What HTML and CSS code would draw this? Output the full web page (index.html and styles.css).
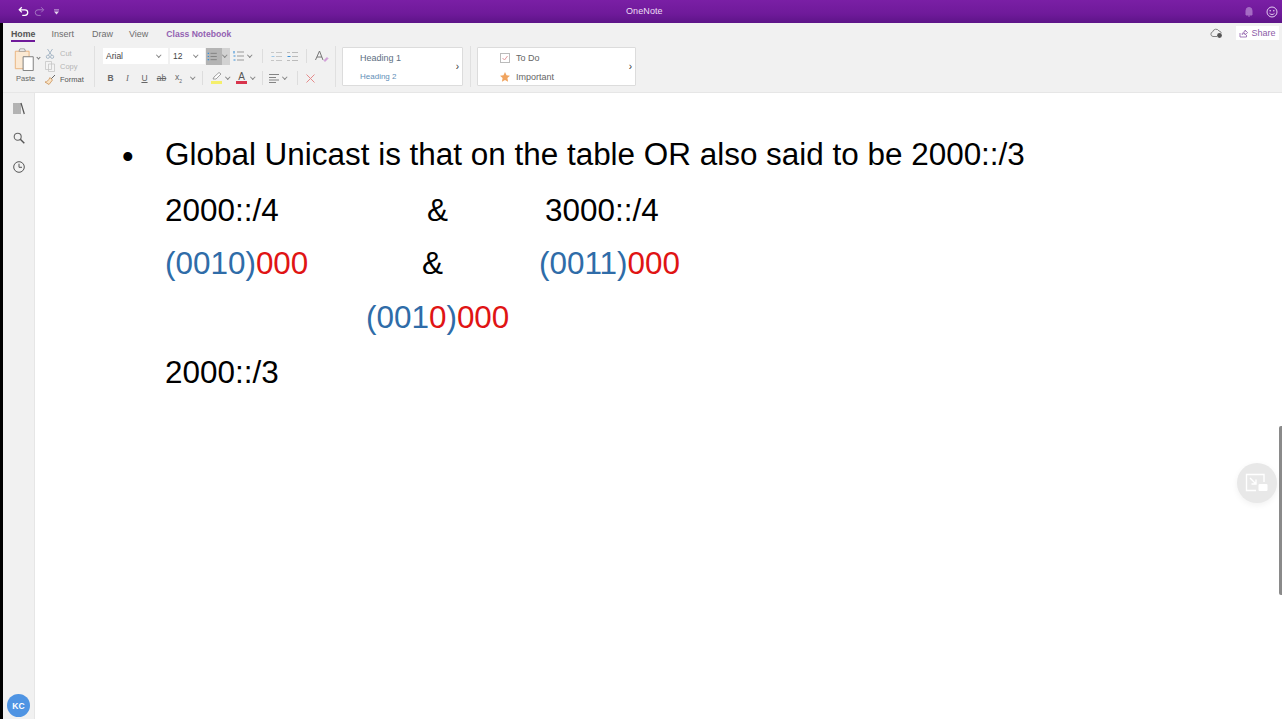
FILE: index.html
```html
<!DOCTYPE html>
<html lang="en">
<head>
<meta charset="utf-8">
<title>OneNote</title>
<link rel="stylesheet" href="styles.css">
</head>
<body>
<div class="app">
  <header class="titlebar">
    <div class="qat">
      <svg class="qi" width="11" height="11" viewBox="0 0 13 12"><path d="M4.500 1 1.500 4l3 3M2 4h6.200a3.300 3.300 0 0 1 0 6.600H5" fill="none" stroke="#fff" stroke-width="1.500"/></svg>
      <svg class="qi" width="11" height="11" viewBox="0 0 13 12"><path d="M8.500 1l3 3-3 3M11 4H4.800a3.300 3.300 0 0 0 0 6.600H8" fill="none" stroke="#a77cc4" stroke-width="1.100"/></svg>
      <svg class="qi-more" width="5" height="6" viewBox="0 0 6 7"><path d="M0 1h6" stroke="#e4d4ee" stroke-width="1"/><path d="M0 3h6L3 6.500z" fill="#e4d4ee"/></svg>
    </div>
    <div class="apptitle">OneNote</div>
    <div class="titleright">
      <svg width="8" height="10" viewBox="0 0 8 10"><path d="M1 8V3.500a3 3 0 0 1 6 0V8zM3 9h2" fill="#a56cc4" stroke="#a56cc4"/></svg>
      <svg width="12" height="12" viewBox="0 0 12 12"><circle cx="6" cy="6" r="5" fill="none" stroke="#e3cdf0" stroke-width="1"/><circle cx="4.200" cy="4.800" r=".8" fill="#e3cdf0"/><circle cx="7.800" cy="4.800" r=".8" fill="#e3cdf0"/><path d="M3.500 7.300c1.200 1.600 3.800 1.600 5 0" fill="none" stroke="#e3cdf0"/></svg>
    </div>
  </header>

  <section class="ribbon">
    <div class="tabs">
      <nav class="tablist">
        <span class="tab tab-active">Home</span>
        <span class="tab">Insert</span>
        <span class="tab t-draw">Draw</span>
        <span class="tab">View</span>
        <span class="tab tab-class">Class Notebook</span>
      </nav>
      <div class="tabright">
        <svg width="13" height="11" viewBox="0 0 13 11"><path d="M3 8.500a2.400 2.400 0 0 1-.3-4.700A3.400 3.400 0 0 1 9 3a2.600 2.600 0 0 1 2.300 2" fill="none" stroke="#777" stroke-width=".9"/><path d="M3 8.500h4" stroke="#777" stroke-width=".9"/><circle cx="9.500" cy="7.500" r="2.400" fill="#555"/></svg>
        <span class="share">
          <svg width="9" height="9" viewBox="0 0 9 9"><path d="M1 4v4h6.500V6M3 5.500C3.300 3.600 4.600 2.800 6 2.800V1l2.600 2.600L6 6V4.400C4.800 4.400 3.800 4.700 3 5.500z" fill="none" stroke="#8d5ba8" stroke-width=".8"/></svg>
          Share
        </span>
      </div>
    </div>
    <div class="tools">
      <div class="clip">
        <div class="paste">
          <svg width="21" height="23" viewBox="0 0 22 25"><path d="M1 3.500h15v19H1z" fill="#fbe9d3" stroke="#e9b27a"/><path d="M5 3.500h7l-1-2.500H6z" fill="#fff" stroke="#999"/><path d="M9.500 9.500h11v15h-11z" fill="#fff" stroke="#777"/></svg>
          <span class="caret-t"></span>
          <span class="paste-l">Paste</span>
        </div>
        <div class="cliprows">
          <span class="cliprow off"><svg width="9" height="11" viewBox="0 0 9 11"><path d="M2 1l4 6M7 1 3 7" stroke="#a9b9c8" fill="none"/><circle cx="2.400" cy="8.800" r="1.600" fill="none" stroke="#a9b9c8"/><circle cx="6.600" cy="8.800" r="1.600" fill="none" stroke="#a9b9c8"/></svg>Cut</span>
          <span class="cliprow off"><svg width="10" height="11" viewBox="0 0 10 11"><path d="M.5.500h6v8h-6zM3.500 3h6v7.500h-6z" fill="#f3f3f3" stroke="#c5c5c5" stroke-width=".8"/></svg>Copy</span>
          <span class="cliprow"><svg width="12" height="11" viewBox="0 0 12 11"><path d="M11 1 7 5" stroke="#666"/><path d="M6 3.500 8.500 6 5 10.500 1 8c2 0 3.500-1.500 5-4.500z" fill="#fbe3c3" stroke="#c9935a" stroke-width=".8"/></svg>Format</span>
        </div>
      </div>
      <span class="vsep"></span>
      <div class="fontgrp">
        <div class="fr">
          <span class="select sel-font">Arial<i class="caret"></i></span>
          <span class="select sel-size">12<i class="caret"></i></span>
          <span class="ic-active">
            <svg width="15" height="13" viewBox="0 0 15 13"><path d="M5 2h9M5 6.500h9M5 11h9" stroke="#7b7b7b" stroke-width="1.200"/><path d="M1 2h2M1 6.500h2M1 11h2" stroke="#3a8fd6" stroke-width="1.600"/></svg>
            <i class="caret caret-on"></i>
          </span>
          <svg width="11" height="12" viewBox="0 0 11 12"><path d="M4 2h7M4 6h7M4 10h7" stroke="#999"/><path d="M1 1v2.500M.5 6h2M.5 10h2" stroke="#3a8fd6" stroke-width="1.100"/></svg>
          <i class="caret caret-l"></i>
          <span class="tsep tsep-a"></span>
          <svg width="11" height="9" viewBox="0 0 11 9"><path d="M5 .500h6M5 4.500h6M5 8.500h6M0 .500h3M0 8.500h3" stroke="#c6c6c6"/><path d="M3.500 4.500H.5" stroke="#9cc6e6"/></svg>
          <svg width="11" height="9" viewBox="0 0 11 9"><path d="M5 .500h6M5 4.500h6M5 8.500h6M0 .500h3M0 8.500h3" stroke="#bbb"/><path d="M.5 4.500h3" stroke="#3a8fd6"/></svg>
          <span class="tsep tsep-b"></span>
          <svg width="14" height="13" viewBox="0 0 14 13"><path d="M.5 10 4.500 1l3.500 9M2 7h5" fill="none" stroke="#777"/><path d="M9 10.500l3-3 1 1-3 3z" fill="#d8a3dd" stroke="#c17fc9" stroke-width=".6"/></svg>
        </div>
        <div class="fr fr2">
          <b class="fmt">B</b>
          <i class="fmt fmt-i">I</i>
          <u class="fmt">U</u>
          <s class="fmt">ab</s>
          <span class="fmt">x<sub>2</sub></span><i class="caret"></i>
          <span class="tsep"></span>
          <span class="hl">
            <svg width="11" height="9" viewBox="0 0 11 9"><path d="M2 7 3 5 8 .5l2 1.500-5 5z" fill="#fff" stroke="#8a8a8a" stroke-width=".8"/></svg>
            <span class="hl-bar"></span>
          </span><i class="caret"></i>
          <span class="hl hl-a">A<span class="hl-bar hl-red"></span></span><i class="caret"></i>
          <span class="tsep"></span>
          <svg width="10" height="9" viewBox="0 0 10 9"><path d="M0 .500h10M0 3.500h7M0 6h10M0 8.500h7" stroke="#777" stroke-width=".9"/></svg>
          <i class="caret"></i>
          <span class="tsep tsep-c"></span>
          <svg class="x-ic" width="9" height="9" viewBox="0 0 9 9"><path d="M.5.500l8 8M8.500.500l-8 8" stroke="#e58a8a"/></svg>
        </div>
      </div>
      <span class="vsep"></span>
      <div class="gallery g-head">
        <div class="g-list">
          <span class="h1">Heading 1</span>
          <span class="h2">Heading 2</span>
        </div>
        <span class="more">›</span>
      </div>
      <span class="vsep"></span>
      <div class="gallery g-tag">
        <div class="g-list g-taglist">
          <span class="tag"><svg width="10" height="10" viewBox="0 0 10 10"><rect x=".5" y=".5" width="9" height="9" fill="#fff" stroke="#bbb"/><path d="M2.500 5l2 2 3-4" fill="none" stroke="#e29aa0"/></svg>To Do</span>
          <span class="tag"><svg width="10" height="10" viewBox="0 0 10 10"><path d="M5 0l1.500 3.300 3.500.4-2.600 2.400.7 3.600L5 7.900 1.900 9.700l.7-3.600L0 3.700l3.500-.4z" fill="#f0a45f"/></svg>Important</span>
        </div>
        <span class="more">›</span>
      </div>
    </div>
  </section>

  <div class="main">
    <aside class="side">
      <div class="side-top">
        <svg width="12" height="13" viewBox="0 0 12 13"><path d="M1 1v11M3 1v11M5 1v11M7 1v11" stroke="#666" stroke-width=".9"/><path d="M8 1l3.300 11" stroke="#555" stroke-width="1.200"/></svg>
        <svg width="12" height="12" viewBox="0 0 12 12"><circle cx="4.700" cy="4.700" r="3.500" fill="none" stroke="#666" stroke-width="1.100"/><path d="M7.300 7.300l4 4" stroke="#555" stroke-width="1.400"/></svg>
        <svg width="12" height="12" viewBox="0 0 12 12"><circle cx="6" cy="6" r="5.300" fill="none" stroke="#555"/><path d="M6 2.700V6.300H9" fill="none" stroke="#555"/></svg>
      </div>
      <div class="avatar">KC</div>
    </aside>
    <main class="page">
      <div class="bullet-line">
        <span class="dot">•</span>
        <span>Global Unicast is that on the table OR also said to be 2000::/3</span>
      </div>
      <div class="line l2"><span class="c1">2000::/4</span><span class="c2">&amp;</span><span>3000::/4</span></div>
      <div class="line l3"><span class="c1"><span class="blue">(0010)</span><span class="red">000</span></span><span class="c2b">&amp;</span><span><span class="blue">(0011)</span><span class="red">000</span></span></div>
      <div class="line l4"><span class="blue">(001</span><span class="red">0</span><span class="blue">)</span><span class="red">000</span></div>
      <div class="line l5">2000::/3</div>
    </main>
    <div class="pip">
      <svg width="24" height="20" viewBox="0 0 24 20"><path d="M19 9V1.500H1.500v16H11" fill="none" stroke="#fff" stroke-width="1.400"/><path d="M5 5l6 6M11 6.500V11H6.500" fill="none" stroke="#fff" stroke-width="1.400"/><rect x="13.500" y="11" width="9" height="7" rx="1" fill="#fff"/></svg>
    </div>
    <div class="thumb"></div>
  </div>
</div>
</body>
</html>
```
FILE: styles.css
```css
* { box-sizing: border-box; }
html, body { margin: 0; height: 100%; overflow: hidden; }
body { background: #000; font-family: "Liberation Sans", Arial, sans-serif; }
.app { margin-left: 3px; height: 719px; display: flex; flex-direction: column; background: #fff; position: relative; }

.titlebar { height: 23px; flex: none; margin-left: -3px; padding: 0 4px 0 18px; display: flex; align-items: center; justify-content: space-between; position: relative;
  background: linear-gradient(#7a1fa5 0, #6f1a9a 60%, #5d1488 100%); color: #ecdff4; font-size: 9px; }
.qat { display: flex; align-items: center; gap: 5px; }
.qi-more { margin-left: 4px; }
.apptitle { position: absolute; left: 626px; top: 6px; font-size: 9px; letter-spacing: .1px; }
.titleright { display: flex; align-items: center; gap: 13px; }

.ribbon { height: 70px; flex: none; background: #f1f1f1; border-bottom: 1px solid #e6e6e6; display: flex; flex-direction: column; }
.tabs { height: 20px; display: flex; justify-content: space-between; align-items: center; padding: 0 3px 0 8px; }
.tablist { display: flex; gap: 16px; font-size: 9px; color: #6e6e6e; }
.tab { height: 17px; padding-top: 4px; }
.tab-active { color: #555; font-weight: 700; font-size: 8.800px; border-bottom: 2px solid #6f1a9a; }
.t-draw { margin-left: 2px; }
.tab-class { color: #9362b2; font-weight: 700; font-size: 8.600px; margin-left: 2px; }
.tabright { display: flex; align-items: center; gap: 13px; }
.share { height: 14px; width: 43px; background: #fff; color: #8d5ba8; font-size: 9px; display: flex; align-items: center; justify-content: center; gap: 3px; }

.tools { display: flex; align-items: center; height: 46px; padding-left: 10px; }
.clip { display: flex; width: 81px; font-size: 7.500px; color: #666; gap: 2px; }
.paste { width: 26px; display: flex; flex-wrap: wrap; position: relative; padding-left: 1px; }
.paste-l { width: 100%; margin-top: 1px; padding-left: 2px; }
.caret-t { position: absolute; left: 24px; top: 8px; width: 3px; height: 3px; border-right: 1px solid #777; border-bottom: 1px solid #777; transform: rotate(45deg); }
.cliprows { display: flex; flex-direction: column; gap: 3px; margin-left: 3px; padding-top: 1px; }
.cliprow { display: flex; align-items: center; gap: 4px; height: 10px; color: #555; }
.cliprow svg { width: 12px; flex: none; }
.off { color: #b5b5b5; }
.vsep { width: 1px; height: 41px; background: #e0e0e0; flex: none; }

.fontgrp { width: 240px; padding: 2px 0 0 8px; display: flex; flex-direction: column; gap: 6px; }
.fr { display: flex; align-items: center; height: 16px; }
.fr2 { font-size: 9px; color: #666; margin-left: -1px; }
.select { height: 16px; background: #fff; font-size: 8.500px; color: #444; display: flex; align-items: center; justify-content: space-between; padding: 0 4px 0 3px; margin-right: 2px; }
.sel-font { width: 65px; }
.sel-size { width: 35px; }
.caret { flex: none; display: inline-block; width: 3.500px; height: 3.500px; border-right: 1px solid #888; border-bottom: 1px solid #888; transform: rotate(45deg); margin: -2px 4px 0 4px; }
.ic-active { width: 24px; height: 17px; display: flex; align-items: center; background: linear-gradient(90deg, #b4b4b4 65%, #d2d2d2 65%); padding-left: 1px; margin-right: 3px; margin-left: -1px; }
.caret-on { margin-left: 5px; }
.caret-l { margin-left: 4px; }
.tsep { width: 1px; height: 14px; background: #ddd; margin: 0 6px 0 3px; flex: none; }
.tsep-a { margin: 0 8px 0 6px; }
.tsep-b { margin: 0 8px; }
.tsep-c { margin-left: 7px; }
.fr svg + svg { margin-left: 5px; }
.x-ic { margin-left: 2px; }
.fmt { width: 17px; text-align: center; font-size: 8.500px; flex: none; }
.fmt-i { font-family: "Liberation Serif", serif; }
.fmt sub { font-size: 5px; }
.hl { width: 11px; display: flex; flex-direction: column; align-items: center; margin-left: 2px; }
.hl-bar { display: block; width: 11px; height: 3px; background: #f5ef6b; }
.hl-a { font-size: 10px; line-height: 9px; color: #555; margin-left: 3px; }
.hl-red { background: #d8344c; }

.gallery { height: 39px; background: #fff; border: 1px solid #dcdcdc; border-radius: 1px; display: flex; align-items: center; justify-content: space-between; padding-right: 3px; flex: none; }
.g-head { width: 121px; margin: 0 7px 0 6px; }
.g-tag { width: 159px; margin-left: 6px; }
.g-list { display: flex; flex-direction: column; padding-left: 17px; font-size: 8.500px; gap: 9px; margin-top: 2px; }
.h1 { color: #5d6f82; font-size: 9px; }
.h2 { color: #5f8fb8; font-size: 8px; }
.g-taglist { padding-left: 22px; gap: 9px; color: #666; font-size: 9px; }
.tag { display: flex; align-items: center; gap: 6px; }
.more { color: #333; font-size: 10px; }

.main { flex: 1; display: flex; position: relative; min-height: 0; }
.side { width: 32px; flex: none; background: #f1f1f1; border-right: 1px solid #e6e6e6; display: flex; flex-direction: column; align-items: center; justify-content: space-between; padding: 9px 0 2px; }
.side-top { display: flex; flex-direction: column; align-items: center; gap: 17px; }
.avatar { width: 23px; height: 23px; border-radius: 50%; background: #4f94e3; color: #fff; font-size: 8.500px; font-weight: 700; display: flex; align-items: center; justify-content: center; }

.page { flex: 1; padding: 44px 0 0 130px; color: #000; font-size: 31.450px; line-height: 36px; }
.bullet-line { position: relative; height: 36px; }
.dot { position: absolute; left: -43px; top: 2px; font-size: 33px; }
.line { height: 36px; display: flex; white-space: pre; }
.l2 { margin-top: 20px; }
.l3 { margin-top: 17px; }
.l4 { margin-top: 18px; padding-left: 201px; }
.l5 { margin-top: 19px; }
.c1 { width: 262px; }
.c2 { width: 118px; }
.c2b { width: 117px; margin-left: -5px; }
.blue { color: #2f6ca8; }
.red { color: #e01414; }

.pip { position: absolute; right: 5px; top: 370px; width: 40px; height: 40px; border-radius: 50%; background: #e8e8e8; box-shadow: 0 2px 6px rgba(0,0,0,.06); display: flex; align-items: center; justify-content: center; }
.thumb { position: absolute; right: 0; top: 333px; width: 3px; height: 169px; background: #8a8a8a; border-radius: 2px 0 0 2px; }
```
